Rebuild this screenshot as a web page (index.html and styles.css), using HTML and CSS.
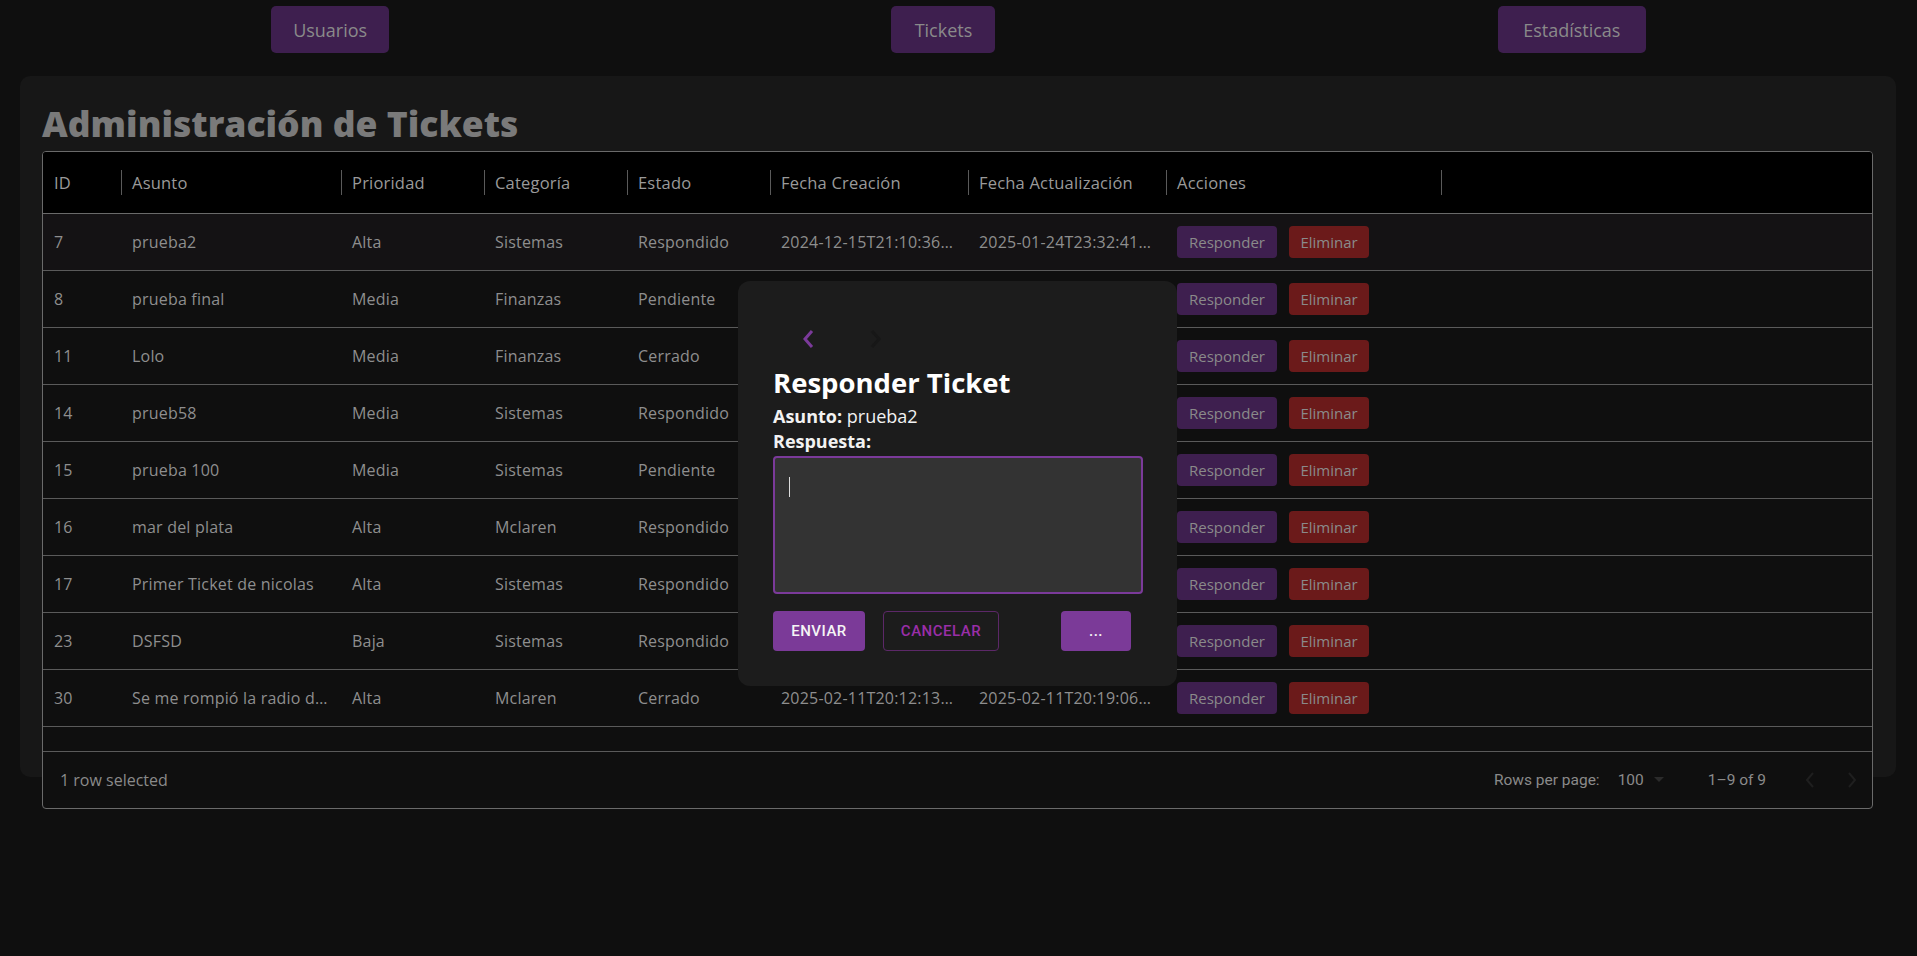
FILE: index.html
```html
<!DOCTYPE html>
<html lang="es">
<head>
<meta charset="utf-8">
<title>Administración de Tickets</title>
<link rel="stylesheet" href="styles.css">
</head>
<body>
<nav class="topnav">
  <button class="navbtn nav-users">Usuarios</button>
  <button class="navbtn nav-tickets">Tickets</button>
  <button class="navbtn nav-stats">Estadísticas</button>
</nav>

<main class="card">
  <h1 class="title">Administración de Tickets</h1>
  <div class="grid">
    <div class="row head">
      <div class="hcell"><span>ID</span><i class="sep"></i></div>
      <div class="hcell"><span>Asunto</span><i class="sep"></i></div>
      <div class="hcell"><span>Prioridad</span><i class="sep"></i></div>
      <div class="hcell"><span>Categoría</span><i class="sep"></i></div>
      <div class="hcell"><span>Estado</span><i class="sep"></i></div>
      <div class="hcell"><span>Fecha Creación</span><i class="sep"></i></div>
      <div class="hcell"><span>Fecha Actualización</span><i class="sep"></i></div>
      <div class="hcell"><span>Acciones</span><i class="sep"></i></div>
      <div class="hcell"></div>
    </div>

    <div class="row selected">
      <div class="cell">7</div><div class="cell">prueba2</div><div class="cell">Alta</div><div class="cell">Sistemas</div><div class="cell">Respondido</div>
      <div class="cell">2024-12-15T21:10:36.912Z</div><div class="cell">2025-01-24T23:32:41.112Z</div>
      <div class="cell actions"><button class="btn-resp">Responder</button><button class="btn-del">Eliminar</button></div><div class="cell"></div>
    </div>
    <div class="row">
      <div class="cell">8</div><div class="cell">prueba final</div><div class="cell">Media</div><div class="cell">Finanzas</div><div class="cell">Pendiente</div>
      <div class="cell">2024-12-16T10:12:36.912Z</div><div class="cell">2024-12-16T10:12:36.912Z</div>
      <div class="cell actions"><button class="btn-resp">Responder</button><button class="btn-del">Eliminar</button></div><div class="cell"></div>
    </div>
    <div class="row">
      <div class="cell">11</div><div class="cell">Lolo</div><div class="cell">Media</div><div class="cell">Finanzas</div><div class="cell">Cerrado</div>
      <div class="cell">2024-12-17T10:12:36.912Z</div><div class="cell">2024-12-17T10:12:36.912Z</div>
      <div class="cell actions"><button class="btn-resp">Responder</button><button class="btn-del">Eliminar</button></div><div class="cell"></div>
    </div>
    <div class="row">
      <div class="cell">14</div><div class="cell">prueb58</div><div class="cell">Media</div><div class="cell">Sistemas</div><div class="cell">Respondido</div>
      <div class="cell">2024-12-18T10:12:36.912Z</div><div class="cell">2024-12-18T10:12:36.912Z</div>
      <div class="cell actions"><button class="btn-resp">Responder</button><button class="btn-del">Eliminar</button></div><div class="cell"></div>
    </div>
    <div class="row">
      <div class="cell">15</div><div class="cell">prueba 100</div><div class="cell">Media</div><div class="cell">Sistemas</div><div class="cell">Pendiente</div>
      <div class="cell">2024-12-19T10:12:36.912Z</div><div class="cell">2024-12-19T10:12:36.912Z</div>
      <div class="cell actions"><button class="btn-resp">Responder</button><button class="btn-del">Eliminar</button></div><div class="cell"></div>
    </div>
    <div class="row">
      <div class="cell">16</div><div class="cell">mar del plata</div><div class="cell">Alta</div><div class="cell">Mclaren</div><div class="cell">Respondido</div>
      <div class="cell">2025-01-10T10:12:36.912Z</div><div class="cell">2025-01-10T10:12:36.912Z</div>
      <div class="cell actions"><button class="btn-resp">Responder</button><button class="btn-del">Eliminar</button></div><div class="cell"></div>
    </div>
    <div class="row">
      <div class="cell">17</div><div class="cell">Primer Ticket de nicolas</div><div class="cell">Alta</div><div class="cell">Sistemas</div><div class="cell">Respondido</div>
      <div class="cell">2025-01-12T10:12:36.912Z</div><div class="cell">2025-01-12T10:12:36.912Z</div>
      <div class="cell actions"><button class="btn-resp">Responder</button><button class="btn-del">Eliminar</button></div><div class="cell"></div>
    </div>
    <div class="row">
      <div class="cell">23</div><div class="cell">DSFSD</div><div class="cell">Baja</div><div class="cell">Sistemas</div><div class="cell">Respondido</div>
      <div class="cell">2025-01-20T10:12:36.912Z</div><div class="cell">2025-01-20T10:12:36.912Z</div>
      <div class="cell actions"><button class="btn-resp">Responder</button><button class="btn-del">Eliminar</button></div><div class="cell"></div>
    </div>
    <div class="row">
      <div class="cell">30</div><div class="cell">Se me rompió la radio del auto</div><div class="cell">Alta</div><div class="cell">Mclaren</div><div class="cell">Cerrado</div>
      <div class="cell">2025-02-11T20:12:13.912Z</div><div class="cell">2025-02-11T20:19:06.512Z</div>
      <div class="cell actions"><button class="btn-resp">Responder</button><button class="btn-del">Eliminar</button></div><div class="cell"></div>
    </div>
    <div class="filler"></div>
    <div class="footer">
      <span class="selcount">1 row selected</span>
      <div class="pager">
        <span>Rows per page:</span>
        <span class="rpp">100 <svg width="10" height="6" viewBox="0 0 10 6"><path d="M0 0h10L5 5z" fill="#2b2b2b"/></svg></span>
        <span class="range">1–9 of 9</span>
        <span class="parrows">
          <svg width="12" height="18" viewBox="0 0 12 18"><path d="M9 2L3 9l6 7" fill="none" stroke="#1f1f1f" stroke-width="2"/></svg>
          <svg width="12" height="18" viewBox="0 0 12 18"><path d="M3 2l6 7-6 7" fill="none" stroke="#1f1f1f" stroke-width="2"/></svg>
        </span>
      </div>
    </div>
  </div>
</main>

<div class="modal">
  <div class="arrows">
    <svg class="arrow" width="16" height="20" viewBox="0 0 16 20"><path d="M12 2L5 10l7 8" fill="none" stroke="#7b3a9a" stroke-width="3"/></svg>
    <svg class="arrow" width="16" height="20" viewBox="0 0 16 20"><path d="M4 2l7 8-7 8" fill="none" stroke="#171717" stroke-width="3"/></svg>
  </div>
  <h2 class="mtitle">Responder Ticket</h2>
  <p class="mline first"><b>Asunto:</b> prueba2</p>
  <p class="mline"><b>Respuesta:</b></p>
  <div class="textarea"><span class="caret"></span></div>
  <div class="mbtns">
    <button class="b-send">ENVIAR</button>
    <button class="b-cancel">CANCELAR</button>
    <button class="b-more">...</button>
  </div>
</div>
</body>
</html>
```

FILE: styles.css
```css
* { box-sizing: border-box; }
html, body { margin: 0; padding: 0; }
body {
  background: #0f0f0f;
  font-family: "Open Sans", "DejaVu Sans", sans-serif;
  color: #8c8c8c;
  width: 1917px;
  height: 956px;
  overflow: hidden;
}
button { font-family: inherit; cursor: pointer; }

.topnav {
  display: flex;
  justify-content: space-around;
  padding: 6px 20px 0;
  height: 53px;
}
.navbtn {
  height: 47px;
  border: none;
  border-radius: 5px;
  background: #3e1f4f;
  color: #8a8a8a;
  font-size: 18px;
  padding: 0;
}
.nav-users { width: 118px; }
.nav-tickets { width: 104px; }
.nav-stats { width: 148px; }

.card {
  margin: 23px 21px 0 20px;
  height: 701px;
  background: #171717;
  border-radius: 10px;
  padding: 25px 23px 0 22px;
}
.title {
  margin: 0 0 5px 0;
  font-size: 35.5px;
  line-height: 45px;
  font-weight: 800;
  color: #7a7a7a;
}

.grid {
  border: 1px solid #6a6a6a;
  border-radius: 4px;
  background: #0f0f0f;
  overflow: hidden;
}
.row {
  display: grid;
  grid-template-columns: 78px 220px 143px 143px 143px 198px 198px 275px 1fr;
  height: 57px;
  border-bottom: 1px solid #5a5a5a;
}
.row.head {
  height: 62px;
  background: #000;
  border-bottom: 1px solid #6a6a6a;
}
.row.selected { background: #141214; }
.hcell {
  display: flex;
  align-items: center;
  justify-content: space-between;
  padding-left: 11px;
  color: #9a9a9a;
  font-size: 16.5px;
  font-weight: 500;
  letter-spacing: 0.2px;
  white-space: nowrap;
}
.sep {
  display: block;
  width: 1px;
  height: 25px;
  background: #5a5a5a;
  margin-right: -1px;
}
.cell {
  display: flex;
  align-items: center;
  padding: 0 11px;
  font-size: 16px;
  letter-spacing: 0.2px;
  color: #8e8e8e;
  white-space: nowrap;
  overflow: hidden;
  min-width: 0;
}
.cell:not(.actions) { display: block; line-height: 56px; text-overflow: ellipsis; }
.actions { gap: 12px; letter-spacing: 0; }
.btn-resp, .btn-del {
  height: 32px;
  border: none;
  border-radius: 4px;
  font-size: 15px;
  color: #8a8a8a;
  padding: 0;
}
.btn-resp { width: 100px; background: #3e1f4f; }
.btn-del { width: 80px; background: #6b1a1a; }

.filler { height: 25px; border-bottom: 1px solid #5a5a5a; }
.footer {
  height: 56px;
  display: flex;
  align-items: center;
  justify-content: space-between;
  padding: 0 14px 0 17px;
}
.selcount { font-size: 16px; color: #8a8a8a; }
.pager {
  display: flex;
  align-items: center;
  font-family: Roboto, "Liberation Sans", sans-serif;
  font-size: 15.5px;
  color: #8a8a8a;
}
.rpp { margin-left: 18px; display: inline-flex; align-items: center; gap: 10px; }
.range { margin-left: 44px; }
.parrows { margin-left: 38px; display: inline-flex; gap: 30px; }

.modal {
  position: fixed;
  left: 738px;
  top: 281px;
  width: 439px;
  height: 405px;
  background: #1c1c1c;
  border-radius: 12px;
  padding: 35px;
  color: #fff;
}
.arrows {
  display: flex;
  align-items: center;
  height: 46px;
  padding-left: 27px;
  gap: 52px;
}
.mtitle {
  margin: 3px 0 0;
  font-size: 27.5px;
  line-height: 36px;
  font-weight: 700;
  color: #fff;
}
.mline {
  margin: 0;
  font-size: 18px;
  line-height: 25px;
  color: #f2f2f2;
}
.mline.first { margin-top: 3px; }
.mline b { font-weight: 700; }
.textarea {
  margin-top: 2px;
  width: 370px;
  height: 138px;
  background: #333;
  border: 2px solid #7b3a9a;
  border-radius: 4px;
  padding: 19px 14px;
}
.caret {
  display: block;
  width: 1px;
  height: 20px;
  background: #ddd;
}
.mbtns {
  display: flex;
  margin-top: 17px;
}
.mbtns button {
  height: 40px;
  border-radius: 4px;
  font-family: Roboto, "Liberation Sans", sans-serif;
  font-size: 15px;
  font-weight: 500;
  letter-spacing: 0.5px;
}
.b-send { width: 92px; background: #7b3a98; color: #f5f5f5; border: none; }
.b-cancel { width: 116px; margin-left: 18px; background: transparent; color: #9a2ea8; border: 1px solid #5c2868; }
.b-more { width: 70px; margin-left: 62px; background: #7b3a98; color: #f5f5f5; border: none; }
```
